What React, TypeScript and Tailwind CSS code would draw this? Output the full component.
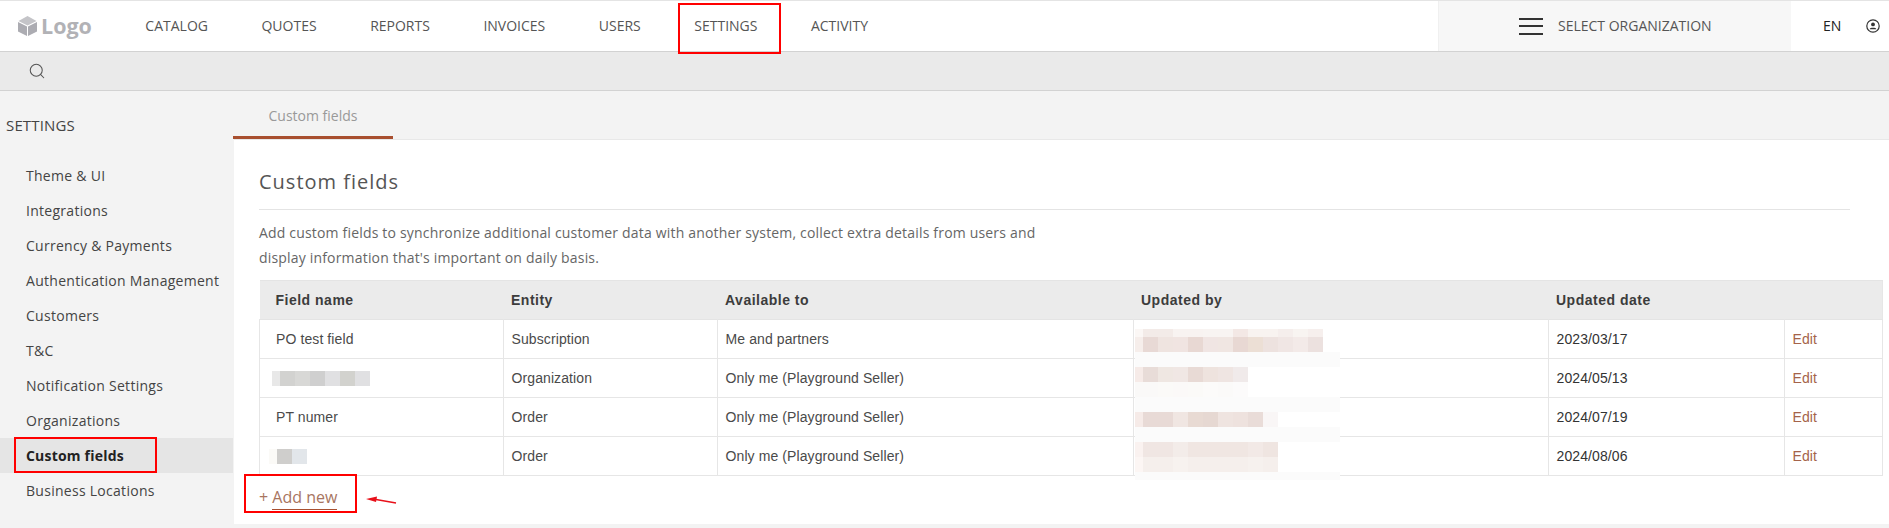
import React from "react";
import { Search } from "lucide-react";

const nav = ["CATALOG", "QUOTES", "REPORTS", "INVOICES", "USERS", "SETTINGS", "ACTIVITY"];
const side = ["Theme & UI", "Integrations", "Currency & Payments", "Authentication Management", "Customers", "T&C", "Notification Settings", "Organizations", "Custom fields", "Business Locations"];
const rows = [
  { name: "PO test field", blocks: null, entity: "Subscription", avail: "Me and partners", date: "2023/03/17" },
  { name: "", blocks: { ml: "ml-[-4px]", c: ["#e8e8e8", "#d2d2d0", "#d8d8d6", "#cfcfcf", "#e0e0e2", "#d2d2ce", "#e0e0e2"] }, entity: "Organization", avail: "Only me (Playground Seller)", date: "2024/05/13" },
  { name: "PT numer", blocks: null, entity: "Order", avail: "Only me (Playground Seller)", date: "2024/07/19" },
  { name: "", blocks: { ml: "ml-[-7px]", c: ["#fbfaf7", "#cfcecc", "#e2e6ea"] }, entity: "Order", avail: "Only me (Playground Seller)", date: "2024/08/06" },
];
const W = "#fbfbfb";
const band = Array(14).fill(W);
const blurRows: { h: string; c: string[] }[] = [
  { h: "h-[8px]", c: ["#fbf7f5", "#f3ebe8", "#f3ebe8", "#f8f3f1", "#f8f3f1", "#f8f4f2", "#f8f4f2", "#f3e8e5", "#f8f3f0", "#f8f3f0", "#f5eeec", "#f8f4f1", "#f6efed"] },
  { h: "h-[15px]", c: ["#f6eeeb", "#e8d9d5", "#efe4e0", "#f0e4e1", "#e8d8d3", "#f0e5e3", "#f0e6e2", "#e8d8d3", "#ecdfd5", "#ede2df", "#f0e6e4", "#f3eae8", "#ece1df"] },
  { h: "h-[15px]", c: band },
  { h: "h-[15px]", c: ["#f6ebe8", "#e8dcd8", "#efe7e2", "#f0e7e4", "#e8dad5", "#eee3de", "#efe5e2", "#f0eaea"] },
  { h: "h-[15px]", c: ["#faf9f8", "#faf9f8", "#fbfaf8", "#fbf9f8", "#fbfaf8", "#fcfbfa", "#fbfaf9", "#fcfbfb"] },
  { h: "h-[15px]", c: band },
  { h: "h-[15px]", c: ["#f6ebe8", "#e8dad6", "#e8dad6", "#f0e6e2", "#e8dad3", "#e6d8d2", "#efe4e0", "#eee2de", "#e9dcd8", "#f9f6f6"] },
  { h: "h-[15px]", c: band },
  { h: "h-[15px]", c: ["#faf2f0", "#f0e6e3", "#f0e6e3", "#f3ece9", "#f0e6e2", "#f0e6e2", "#f0e6e2", "#f0e6e2", "#f2e9e6", "#efe5e1"] },
  { h: "h-[15px]", c: ["#fcf6f4", "#f5efec", "#f5efec", "#f7f2ef", "#f5efec", "#f5efec", "#f5efec", "#f5efec", "#f6f1ee", "#f5efec"] },
  { h: "h-[8px]", c: band },
];
const td = "border-l border-b border-[#e6e6e6] pl-[7.5px] pr-[8px] align-middle";
const th = "pl-[7.5px] pr-[8px] pt-[1px] text-left font-bold";

function BlurCell({ color, i }: { color: string; i: number }) {
  return <div className={i === 0 ? "w-[8px] h-full" : i === 13 ? "w-[17px] h-full" : "w-[15px] h-full"} style={{ backgroundColor: color }} />;
}

export default function App() {
  return (
    <div className="relative flex h-[528px] w-full flex-col overflow-hidden bg-[#f3f3f3] font-['Open_Sans',sans-serif] text-[14px] text-[#555]">
      <header className="flex h-[52px] shrink-0 items-stretch border-t border-b border-t-[#e4e4e4] border-b-[#d2d2d2] bg-white">
        <div className="flex w-[118.6px] items-center pl-[18px]">
          <svg width="19" height="20" viewBox="0 0 19 20" className="shrink-0">
            <path d="M9.5 0 L18.5 5 L9.5 9.5 L0.5 5 Z" fill="#c4c4c8" />
            <path d="M0 6 L9 10.5 L9 20 L0 15.5 Z" fill="#acacb2" />
            <path d="M19 6 L10 10.5 L10 20 L19 15.5 Z" fill="#acacb2" />
          </svg>
          <span className="ml-[4px] text-[21.5px] font-bold leading-none text-[#b2b2b6]">Logo</span>
        </div>
        <nav className="flex items-center pb-[2px]">
          {nav.map((n) => (
            <span key={n} className="px-[26.75px]">{n}</span>
          ))}
        </nav>
        <div className="ml-auto flex w-[353px] items-center border-l border-[#f0f0f0] bg-[#f7f7f7] pl-[80px]">
          <div className="flex w-[24px] flex-col gap-[5.5px]">
            <div className="h-[2px] bg-[#333]" />
            <div className="h-[2px] bg-[#333]" />
            <div className="h-[2px] bg-[#333]" />
          </div>
          <span className="ml-[15px] pb-[2px]">SELECT ORGANIZATION</span>
        </div>
        <div className="flex w-[98px] items-center pl-[32px]">
          <span className="pb-[2px] text-[#222]">EN</span>
          <svg width="14" height="14" viewBox="0 0 14 14" className="ml-[25px]">
            <circle cx="7" cy="7" r="6.2" fill="none" stroke="#333" strokeWidth="1.2" />
            <circle cx="7" cy="5.4" r="1.9" fill="#333" />
            <path d="M3.6 10.2 C4 8.4 10 8.4 10.4 10.2 Z" fill="#333" />
          </svg>
        </div>
      </header>
      <div className="flex h-[39px] shrink-0 items-center border-b border-[#d2d2d2] bg-[#eaeaea] pl-[28px]">
        <Search size={18} strokeWidth={1.4} color="#555" />
      </div>
      <div className="flex min-h-0 flex-1">
        <aside className="w-[233px] shrink-0">
          <div className="pl-[6px] pt-[24px] text-[15px] leading-[20px] tracking-[0.15px] text-[#444]">SETTINGS</div>
          <ul className="mt-[23px]">
            {side.map((s) => (
              <li key={s} className={s === "Custom fields" ? "flex h-[35px] items-center bg-[#e5e5e5] pl-[26px] font-bold tracking-[0.2px] text-[#222]" : "flex h-[35px] items-center pl-[26px] tracking-[0.28px] text-[#444]"}>{s}</li>
            ))}
          </ul>
        </aside>
        <main className="flex min-w-0 flex-1 flex-col">
          <div className="flex h-[48px] shrink-0">
            <div className="flex h-[48px] w-[160px] items-center justify-center border-b-[3px] border-[#a84f2f] pt-[3px] text-[#999]">Custom fields</div>
          </div>
          <section className="ml-px h-[385px] shrink-0 border-t border-[#e8e8e8] bg-white pl-[25px] pr-[6px]">
            <h1 className="mr-[33px] h-[70px] border-b border-[#e4e4e4] pt-[29px] text-[20px] leading-[25px] tracking-[1px] text-[#555]">Custom fields</h1>
            <p className="mt-[10px] leading-[25px] tracking-[0.18px] text-[#666]">
              Add custom fields to synchronize additional customer data with another system, collect extra details from users and<br />display information that's important on daily basis.
            </p>
            <div className="relative mt-[10px]">
              <table className="w-full table-fixed border-collapse border-r border-[#e6e6e6] font-['Liberation_Sans',Arial,sans-serif] text-[14px] tracking-[0.1px] text-[#4a4a4a]">
                <colgroup>
                  <col className="w-[244px]" />
                  <col className="w-[214px]" />
                  <col className="w-[416px]" />
                  <col className="w-[415px]" />
                  <col className="w-[236px]" />
                  <col />
                </colgroup>
                <thead>
                  <tr className="h-[39px] border-t border-b border-[#e4e4e4] bg-[#ebebeb] tracking-[0.5px] text-[#3c3c3c]">
                    <th className={th + " pl-[16px]"}>Field name</th>
                    <th className={th}>Entity</th>
                    <th className={th}>Available to</th>
                    <th className={th}>Updated by</th>
                    <th className={th}>Updated date</th>
                    <th className={th} />
                  </tr>
                </thead>
                <tbody>
                  {rows.map((r) => (
                    <tr key={r.date} className="h-[39px]">
                      <td className={td + " pl-[16px]"}>
                        {r.blocks ? (
                          <div className={"flex h-[15px] " + r.blocks.ml}>
                            {r.blocks.c.map((c, i) => (
                              <BlurCell key={i} color={c} i={i} />
                            ))}
                          </div>
                        ) : (
                          r.name
                        )}
                      </td>
                      <td className={td}>{r.entity}</td>
                      <td className={td}>{r.avail}</td>
                      <td className={td} />
                      <td className={td + " text-[#333]"}>{r.date}</td>
                      <td className={td + " text-[#a5634a]"}>Edit</td>
                    </tr>
                  ))}
                </tbody>
              </table>
              <div className="absolute left-[876px] top-[49px] flex flex-col">
                {blurRows.map((row, ri) => (
                  <div key={ri} className={"flex " + row.h}>
                    {row.c.map((c, i) => (
                      <BlurCell key={i} color={c} i={i} />
                    ))}
                  </div>
                ))}
              </div>
            </div>
            <div className="mt-[10px] text-[16px] leading-[22px] text-[#a8755f]">
              + <span className="inline-block border-b border-[#a84f2f] pb-[1px] leading-[22px]">Add new</span>
            </div>
          </section>
        </main>
      </div>
      <div className="absolute left-[678px] top-[3px] h-[51px] w-[103px] border-[2px] border-[#ff0000]" />
      <div className="absolute left-[14px] top-[437px] h-[36px] w-[143px] border-[2px] border-[#ff0000]" />
      <div className="absolute left-[244px] top-[474px] h-[39px] w-[113px] border-[2px] border-[#ff0000]" />
      <svg className="absolute left-[364px] top-[494px]" width="34" height="12" viewBox="0 0 34 12">
        <path d="M12 5.5 L32 9" stroke="#e8101a" strokeWidth="1.4" fill="none" />
        <path d="M2 5 L13 2.5 L12 8 Z" fill="#e8101a" />
      </svg>
    </div>
  );
}
